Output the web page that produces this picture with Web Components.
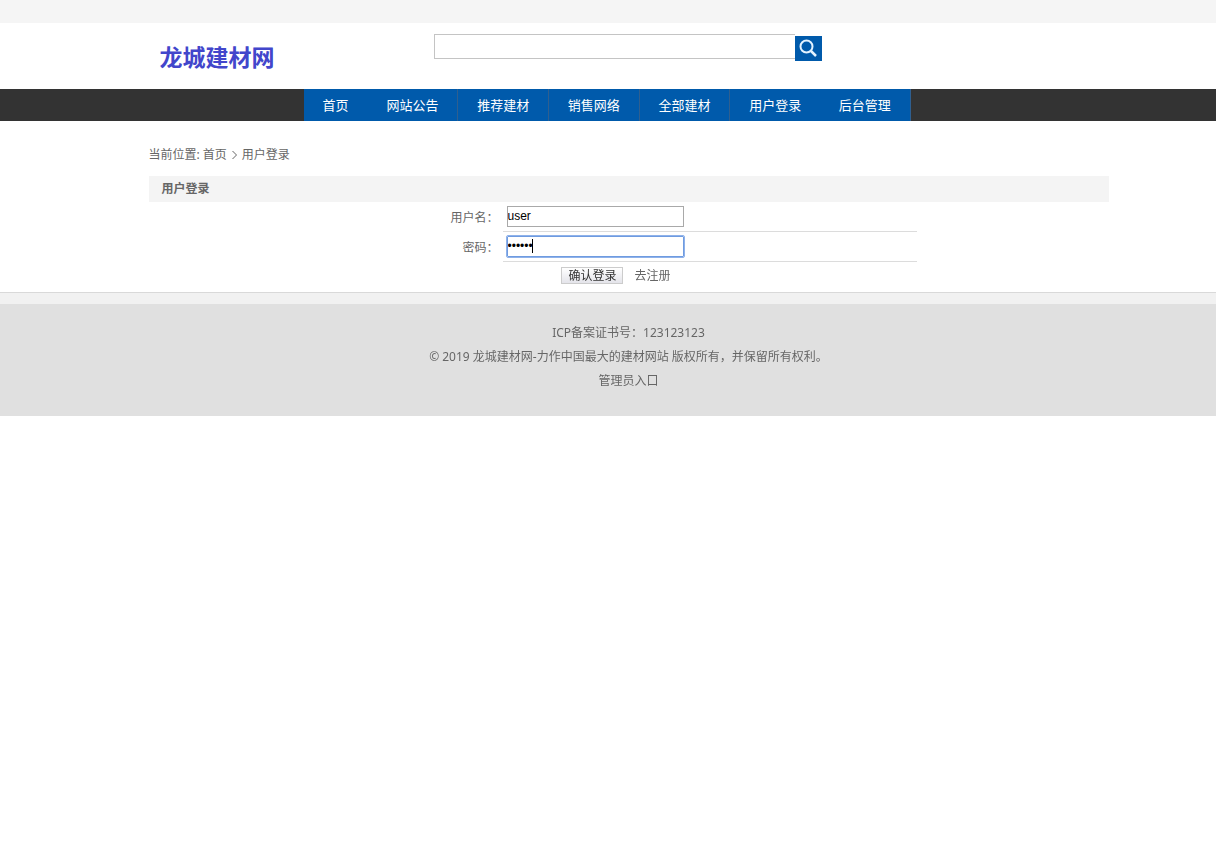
<!DOCTYPE html>
<html lang="zh-CN">
<head>
<meta charset="utf-8">
<title>用户登录</title>
<style>
  body {
    margin: 0;
    background: #fff;
    color: #666;
    font: 12px/24px "Noto Sans", "Noto Sans CJK SC", sans-serif;
    --gutter: 41px;
    --content: 960px;
    --blue: #005aab;
  }
</style>
</head>
<body>
<site-header name="龙城建材网"></site-header>
<site-nav>
  <nav-item href="#">首页</nav-item>
  <nav-item href="#" divider>网站公告</nav-item>
  <nav-item href="#" divider>推荐建材</nav-item>
  <nav-item href="#" divider>销售网络</nav-item>
  <nav-item href="#" divider>全部建材</nav-item>
  <nav-item href="#">用户登录</nav-item>
  <nav-item href="#" divider>后台管理</nav-item>
</site-nav>
<page-content>
  <bread-crumb home="首页">用户登录</bread-crumb>
  <title-bar>用户登录</title-bar>
  <login-form></login-form>
</page-content>
<site-footer>
  <div>ICP备案证书号：123123123</div>
  <div>© 2019 龙城建材网-力作中国最大的建材网站 版权所有，并保留所有权利。</div>
  <div>管理员入口</div>
</site-footer>

<script>
class BaseElement extends HTMLElement {
  constructor() {
    super();
    this.shadow = this.attachShadow({ mode: 'open' });
    this.template = document.createElement('template');
  }

  connectedCallback() {
    this.template.innerHTML = this.render();
    this.shadow.replaceChildren(this.template.content.cloneNode(true));
  }
}

class SiteHeader extends BaseElement {
  render() {
    return `
      <style>
        :host {
          display: block;
        }

        .top {
          height: 23px;
          background: #f5f5f5;
        }

        .bar {
          padding-left: var(--gutter);
        }

        .inner {
          display: grid;
          grid-template-columns: 285px 1fr;
          max-width: var(--content);
          height: 66px;
          margin: 0 auto;
        }

        h1 {
          margin: 0;
          padding: 18px 0 0 11px;
          color: #4246cb;
          font-size: 23px;
          line-height: 32px;
        }

        form {
          display: flex;
          align-items: flex-start;
          padding-top: 11px;
        }

        input {
          box-sizing: border-box;
          width: 361px;
          height: 25px;
          border: 1px solid #c4c4c4;
          border-right: 0;
          padding: 0 4px;
          outline: none;
        }

        button {
          width: 27px;
          height: 25px;
          margin-top: 2px;
          border: 0;
          padding: 0;
          background: var(--blue);
        }

        svg {
          display: block;
        }
      </style>
      <div class="top"></div>
      <div class="bar">
        <div class="inner">
          <h1>${this.getAttribute('name')}</h1>
          <form role="search">
            <input type="text" aria-label="搜索">
            <button type="button" aria-label="搜索">
              <svg width="27" height="25" fill="none" stroke="#e4f3ff">
                <circle cx="11.5" cy="10.5" r="6" stroke-width="2"/>
                <path d="M16 15L21 20" stroke-width="2.5"/>
              </svg>
            </button>
          </form>
        </div>
      </div>
    `;
  }
}

class SiteNav extends BaseElement {
  render() {
    return `
      <style>
        :host {
          display: block;
          padding-left: var(--gutter);
          background: #333;
        }

        .inner {
          box-sizing: border-box;
          max-width: var(--content);
          margin: 0 auto;
          padding-left: 155px;
        }

        nav {
          display: flex;
          width: 607px;
          background: var(--blue);
        }

        ::slotted(nav-item) {
          flex: 1;
        }

        ::slotted(nav-item:first-child) {
          flex: 0 0 64px;
        }
      </style>
      <div class="inner"><nav><slot></slot></nav></div>
    `;
  }
}

class NavItem extends BaseElement {
  render() {
    return `
      <style>
        :host {
          display: block;
          box-sizing: border-box;
        }

        :host([divider]) {
          border-right: 1px solid #2f5f8f;
        }

        a {
          display: block;
          padding-left: 19px;
          color: #fff;
          font-size: 13px;
          line-height: 32px;
          text-decoration: none;
          white-space: nowrap;
        }
      </style>
      <a href="${this.getAttribute('href')}"><slot></slot></a>
    `;
  }
}

class PageContent extends BaseElement {
  render() {
    return `
      <style>
        :host {
          display: block;
          padding-left: var(--gutter);
        }

        main {
          max-width: var(--content);
          margin: 0 auto;
          padding-top: 22px;
        }
      </style>
      <main><slot></slot></main>
    `;
  }
}

class BreadCrumb extends BaseElement {
  render() {
    return `
      <style>
        :host {
          display: block;
          margin-bottom: 9px;
        }

        nav {
          display: flex;
          align-items: center;
        }

        a {
          margin-left: 3px;
          color: inherit;
          text-decoration: none;
        }

        svg {
          margin: 0 4px;
        }
      </style>
      <nav>
        <span>当前位置:</span>
        <a href="#">${this.getAttribute('home')}</a>
        <svg width="7" height="10" fill="none" stroke="#666"><path d="M1.5 1L5.5 5L1.5 9"/></svg>
        <slot></slot>
      </nav>
    `;
  }
}

class TitleBar extends BaseElement {
  render() {
    return `
      <style>
        :host {
          display: block;
          background: #f4f4f4;
        }

        h2 {
          margin: 0;
          padding-left: 13px;
          font-size: 12px;
          line-height: 26px;
        }
      </style>
      <h2><slot></slot></h2>
    `;
  }
}

class LoginForm extends BaseElement {
  render() {
    return `
      <style>
        :host {
          display: block;
        }

        form {
          width: 60%;
          margin: 0 auto;
        }

        .row {
          display: grid;
          grid-template-columns: 162px 1fr;
          height: 30px;
        }

        label {
          padding: 2px 4px 0 0;
          line-height: 28px;
          text-align: right;
        }

        .field {
          border-bottom: 1px solid #dcdcdc;
          padding: 4px 0 0 4px;
        }

        input {
          display: block;
          box-sizing: border-box;
          width: 177px;
          height: 21px;
          border: 1px solid #a9a9a9;
          padding: 0 0 1px;
          color: #000;
          font: 12px "Liberation Sans", Arial, sans-serif;
        }

        input:focus {
          border-color: #6f9be0;
          outline: 1px solid #8fb2ea;
          border-radius: 1px;
        }

        /* steady caret after the filled-in password */
        #password:focus {
          background: linear-gradient(#000, #000) 24px 2px / 1px 14px no-repeat #fff;
          caret-color: transparent;
        }

        .actions {
          display: flex;
          align-items: center;
          justify-content: center;
          gap: 11px;
          height: 30px;
          box-sizing: border-box;
          padding: 0 25px 3px 0;
        }

        button {
          width: 62px;
          height: 17px;
          border: 1px solid #ccc;
          padding: 0;
          background: linear-gradient(#fff, #e4e4ea);
          color: #333;
          font: inherit;
          line-height: 15px;
        }

        a {
          color: inherit;
          text-decoration: none;
        }
      </style>
      <form>
        <div class="row">
          <label for="name">用户名：</label>
          <div class="field"><input id="name" type="text" value="user"></div>
        </div>
        <div class="row">
          <label for="password">密码：</label>
          <div class="field"><input id="password" type="password" value="123456"></div>
        </div>
        <div class="actions">
          <button type="button">确认登录</button>
          <a href="#">去注册</a>
        </div>
      </form>
    `;
  }

  connectedCallback() {
    super.connectedCallback();
    const password = this.shadow.querySelector('#password');
    password.focus();
    password.setSelectionRange(6, 6);
  }
}

class SiteFooter extends BaseElement {
  render() {
    return `
      <style>
        :host {
          display: block;
        }

        .strip {
          height: 11px;
          border-top: 1px solid #d9d9d9;
          background: #f1f1f1;
        }

        footer {
          padding: 17px 0 23px var(--gutter);
          background: #e0e0e0;
          text-align: center;
        }
      </style>
      <div class="strip"></div>
      <footer><slot></slot></footer>
    `;
  }
}

customElements.define('site-header', SiteHeader);
customElements.define('site-nav', SiteNav);
customElements.define('nav-item', NavItem);
customElements.define('page-content', PageContent);
customElements.define('bread-crumb', BreadCrumb);
customElements.define('title-bar', TitleBar);
customElements.define('login-form', LoginForm);
customElements.define('site-footer', SiteFooter);
</script>
</body>
</html>
